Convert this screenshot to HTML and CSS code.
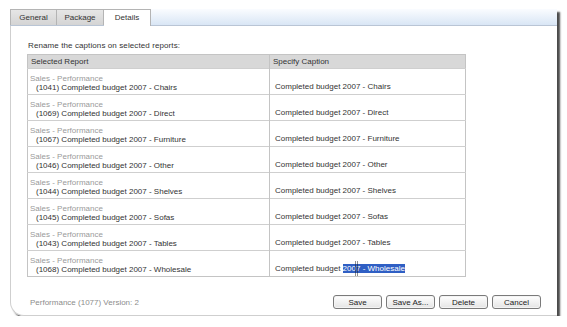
FILE: index.html
```html
<!DOCTYPE html>
<html>
<head>
<meta charset="utf-8">
<link rel="stylesheet" href="styles.css">
</head>
<body>
<div class="window">
  <div class="tabstrip">
    <div class="tab">General</div>
    <div class="tab">Package</div>
    <div class="tab active">Details</div>
  </div>
  <div class="body">
    <div class="intro">Rename the captions on selected reports:</div>
    <table class="grid">
      <thead>
        <tr><th class="c1">Selected Report</th><th class="c2">Specify Caption</th></tr>
      </thead>
      <tbody>
        <tr><td class="c1"><div class="grp">Sales - Performance</div><div class="rep">(1041) Completed budget 2007 - Chairs</div></td><td class="c2">Completed budget 2007 - Chairs</td></tr>
        <tr><td class="c1"><div class="grp">Sales - Performance</div><div class="rep">(1069) Completed budget 2007 - Direct</div></td><td class="c2">Completed budget 2007 - Direct</td></tr>
        <tr><td class="c1"><div class="grp">Sales - Performance</div><div class="rep">(1067) Completed budget 2007 - Furniture</div></td><td class="c2">Completed budget 2007 - Furniture</td></tr>
        <tr><td class="c1"><div class="grp">Sales - Performance</div><div class="rep">(1046) Completed budget 2007 - Other</div></td><td class="c2">Completed budget 2007 - Other</td></tr>
        <tr><td class="c1"><div class="grp">Sales - Performance</div><div class="rep">(1044) Completed budget 2007 - Shelves</div></td><td class="c2">Completed budget 2007 - Shelves</td></tr>
        <tr><td class="c1"><div class="grp">Sales - Performance</div><div class="rep">(1045) Completed budget 2007 - Sofas</div></td><td class="c2">Completed budget 2007 - Sofas</td></tr>
        <tr><td class="c1"><div class="grp">Sales - Performance</div><div class="rep">(1043) Completed budget 2007 - Tables</div></td><td class="c2">Completed budget 2007 - Tables</td></tr>
        <tr><td class="c1"><div class="grp">Sales - Performance</div><div class="rep">(1068) Completed budget 2007 - Wholesale</div></td><td class="c2">Completed budget <span class="sel">2007 - Wholesale<span class="ibeam"></span></span></td></tr>
      </tbody>
    </table>
    <div class="footer">
      <div class="version">Performance (1077) Version: 2</div>
      <div class="buttons">
        <button class="btn">Save</button>
        <button class="btn">Save As...</button>
        <button class="btn">Delete</button>
        <button class="btn">Cancel</button>
      </div>
    </div>
  </div>
</div>
</body>
</html>
```

FILE: styles.css
```css
html, body {
  margin: 0;
  padding: 0;
  background: #ffffff;
}
body {
  font-family: "Liberation Sans", Arial, sans-serif;
  font-size: 8px;
  color: #333;
  padding: 9px 0 0 10px;
}
.window {
  width: 547px;
  display: flex;
  flex-direction: column;
  box-shadow: 3px 3px 2px #4a4a4a;
  border-bottom-left-radius: 14px;
}
.tabstrip {
  display: flex;
  height: 16px;
  background: linear-gradient(#fafcff, #d9e6f5);
  border-bottom: 1px solid #b9c5d5;
}
.tab {
  width: 47px;
  height: 16px;
  box-sizing: border-box;
  background: linear-gradient(#e6e6e6, #d4d4d4);
  border: 1px solid #b4b4b4;
  border-bottom: none;
  border-left: none;
  text-align: center;
  line-height: 15px;
  color: #333;
}
.tab:first-child {
  border-left: 1px solid #b4b4b4;
}
.tab.active {
  background: #fff;
  height: 17px;
  margin-bottom: -1px;
}
.body {
  background: #fff;
  border-left: 1px solid #cfcfcf;
  border-bottom: 1px solid #cfcfcf;
  border-bottom-left-radius: 14px;
  padding: 15px 16px 6px 16px;
}
.intro {
  color: #333;
  letter-spacing: 0.1px;
  margin: 0 0 3px 1px;
  line-height: 10px;
}
.grid {
  width: 439px;
  border-collapse: collapse;
  border: 1px solid #c4c4c4;
}
.grid th {
  background: #d8d8d8;
  text-align: left;
  font-weight: normal;
  height: 13px;
  padding: 0 3px;
  line-height: 13px;
  color: #333;
}
.grid th.c1 {
  border-right: 1px solid #c4c4c4;
}
.grid .c1 {
  width: 235px;
}
.grid td {
  border-top: 1px solid #cfcfcf;
  height: 26px;
  padding: 0;
  box-sizing: border-box;
}
.grid td.c1 {
  border-right: 1px solid #c4c4c4;
  vertical-align: top;
  padding: 5px 0 0 2px;
}
.grid td.c2 {
  vertical-align: bottom;
  padding: 0 0 2px 5px;
  line-height: 10px;
}
.grp {
  color: #9a9a9a;
  line-height: 9px;
}
.rep {
  padding-left: 6px;
  line-height: 10px;
}
.sel {
  position: relative;
  background: #2f5fc4;
  color: #fff;
}
.ibeam {
  position: absolute;
  left: 12px;
  top: -3px;
  width: 3px;
  height: 15px;
  border-left: 1px solid #222;
  border-right: 1px solid #222;
  box-sizing: border-box;
  opacity: 0.5;
}
.footer {
  display: flex;
  justify-content: space-between;
  align-items: center;
  margin-top: 18px;
  padding-left: 3px;
}
.version {
  color: #8c8c8c;
}
.buttons {
  display: flex;
  gap: 4px;
}
.btn {
  font-family: "Liberation Sans", Arial, sans-serif;
  font-size: 8px;
  color: #222;
  width: 49px;
  height: 14px;
  padding: 0;
  border: 1px solid #7a7a7a;
  border-radius: 3px;
  background: linear-gradient(#ffffff, #e4e4e4);
  box-shadow: inset 0 0 0 1px #f4f4f4;
}
```
